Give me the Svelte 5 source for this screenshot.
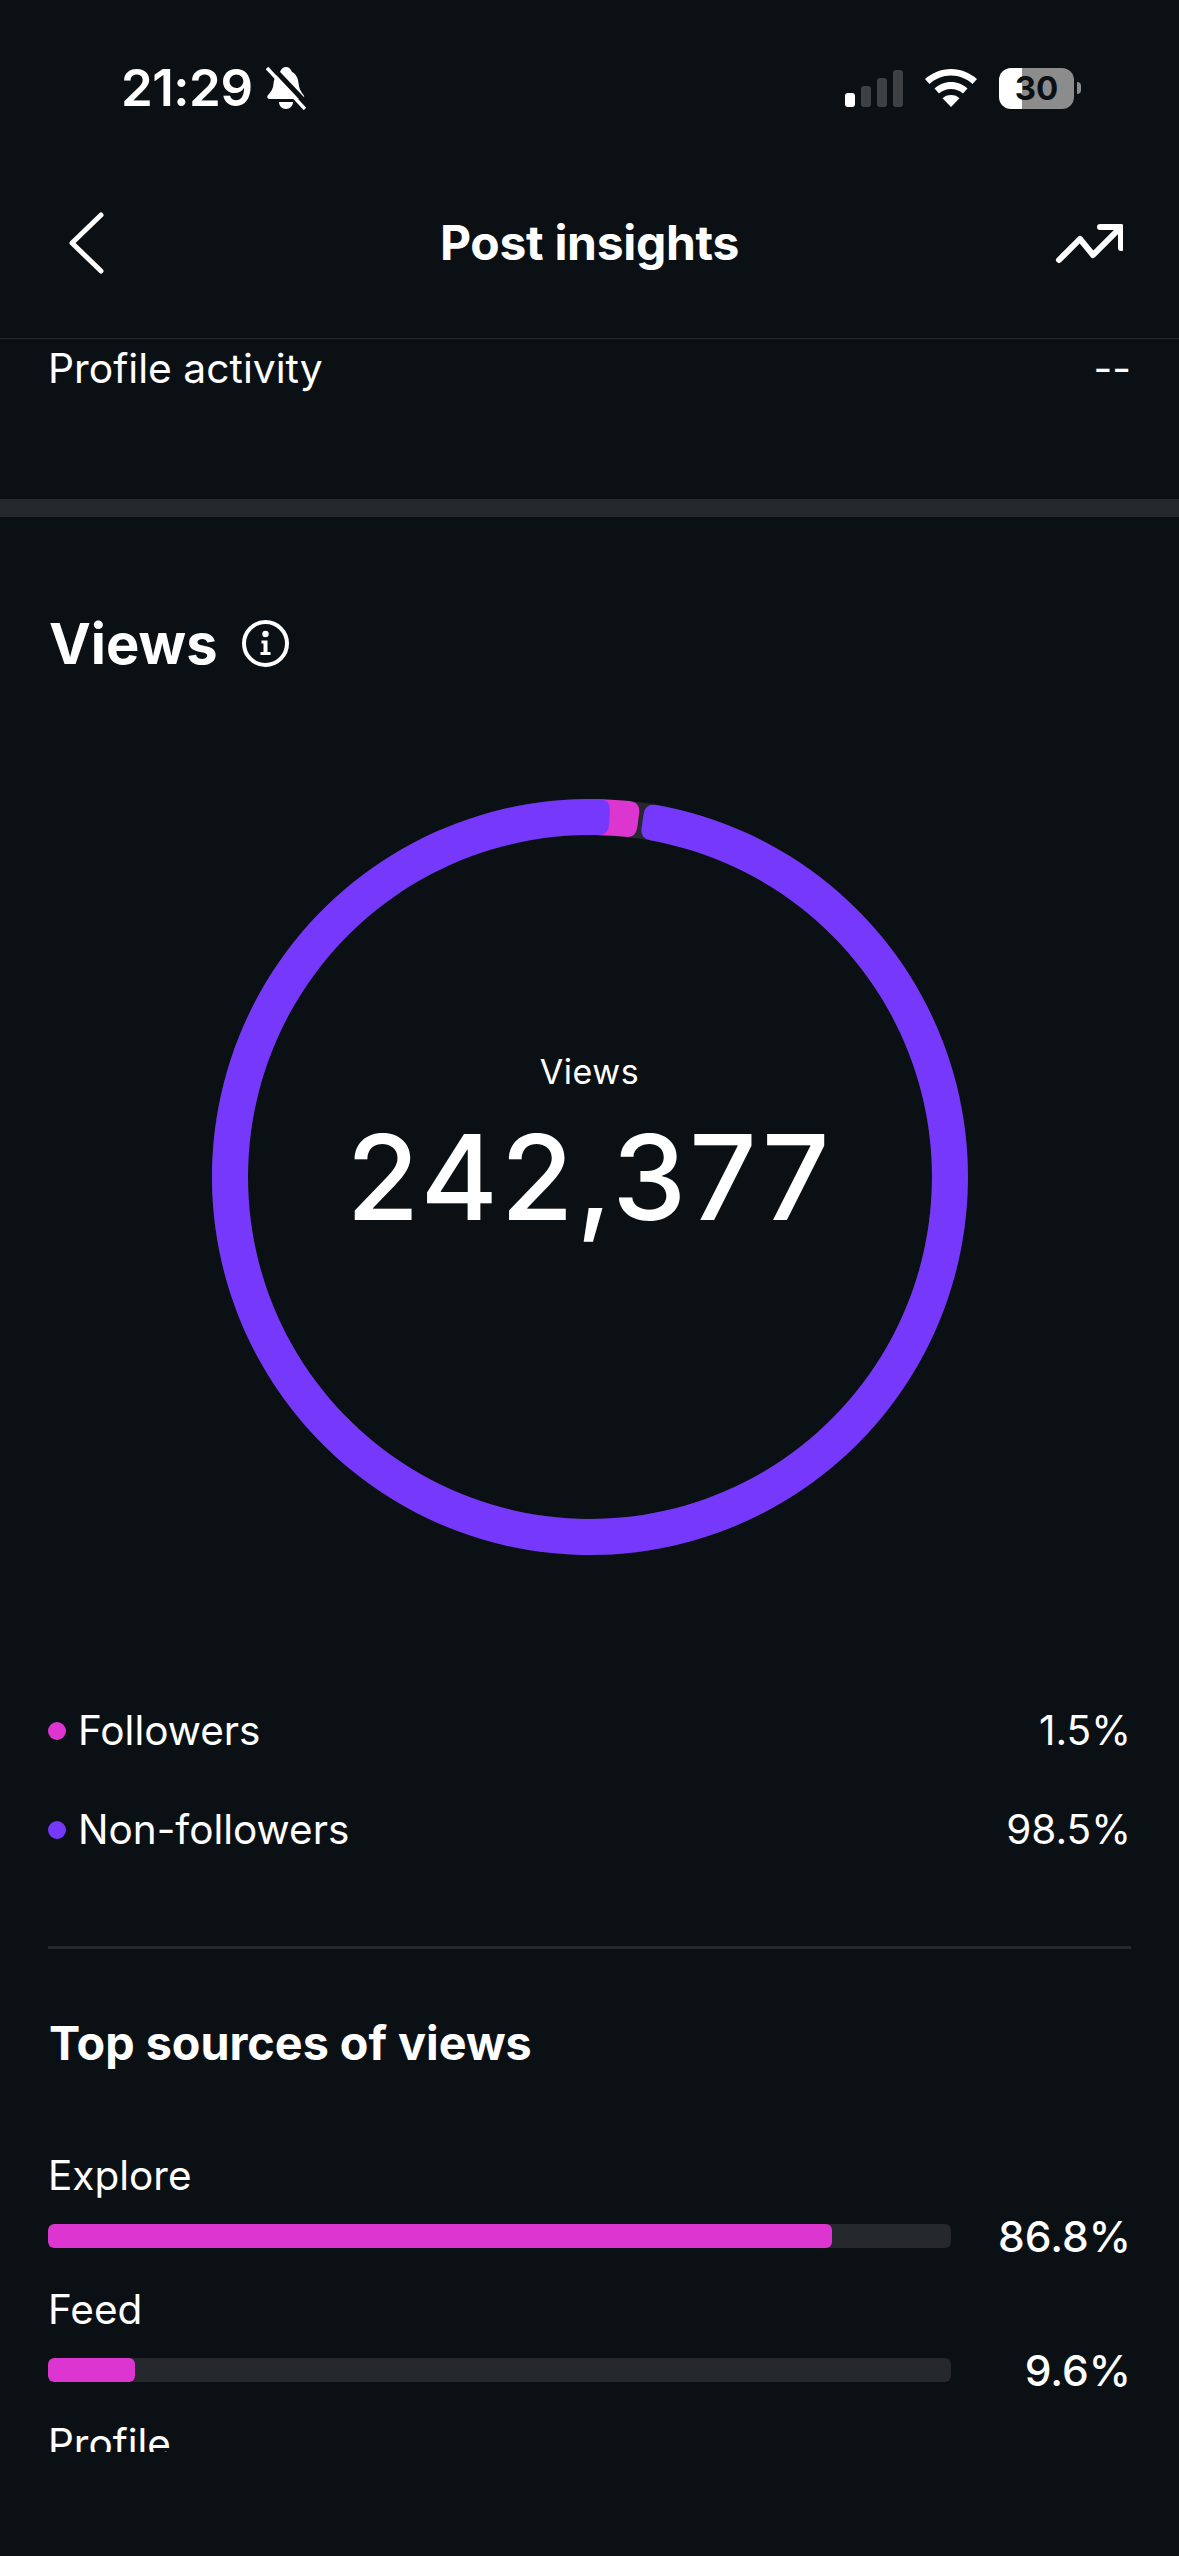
<script>
	const sources = [
		{ name: 'Explore', pct: 86.8 },
		{ name: 'Feed', pct: 9.6 },
		{ name: 'Profile' }
	];

	const legend = [
		{ name: 'Followers', value: '1.5%', color: '#dc35d0' },
		{ name: 'Non-followers', value: '98.5%', color: '#7638fa' }
	];

	const C = 378;
	const R_OUT = 378;
	const R_IN = 342;

	function pt(r, deg) {
		const a = ((deg - 90) * Math.PI) / 180;
		return `${(C + r * Math.cos(a)).toFixed(2)} ${(C + r * Math.sin(a)).toFixed(2)}`;
	}

	// ring segment with small rounded corners, angles clockwise from 12 o'clock
	function segment(from, to, corner = 11) {
		const da = (corner / 360) * (180 / Math.PI);
		const large = to - from - 2 * da > 180 ? 1 : 0;
		return [
			`M ${pt(R_OUT, from + da)}`,
			`A ${R_OUT} ${R_OUT} 0 ${large} 1 ${pt(R_OUT, to - da)}`,
			`Q ${pt(R_OUT, to)} ${pt(R_OUT - corner, to)}`,
			`L ${pt(R_IN + corner, to)}`,
			`Q ${pt(R_IN, to)} ${pt(R_IN, to - da)}`,
			`A ${R_IN} ${R_IN} 0 ${large} 0 ${pt(R_IN, from + da)}`,
			`Q ${pt(R_IN, from)} ${pt(R_IN + corner, from)}`,
			`L ${pt(R_OUT - corner, from)}`,
			`Q ${pt(R_OUT, from)} ${pt(R_OUT, from + da)}`,
			'Z'
		].join(' ');
	}
</script>

<div class="screen">
	<div class="status">
		<div class="status-left">
			<span class="time">21:29</span>
			<svg class="bell" width="40" height="44" viewBox="0 0 40 44">
				<path fill="#fff" d="M20 1c3 0 5 2 6 5 4 2 6 6 6.500 11 .5 5 2 8 5 12 1.500 2 .5 4-2 4H4c-2.500 0-3.500-2-2-4 3-3 5-6 5.500-11 .5-6 3-10 6.500-12 1-3 3-5 6-5zM13 36h14c0 4-3 7-7 7s-7-3-7-7z"/>
				<path d="M5 0 42 39" stroke="#0b1014" stroke-width="5"/>
				<path d="M1 2 39 43" stroke="#fff" stroke-width="3.500"/>
			</svg>
		</div>
		<div class="status-right">
			<div class="signal">
				<i class="on" style="height:14px"></i>
				<i style="height:21px"></i>
				<i style="height:29px"></i>
				<i style="height:37px"></i>
			</div>
			<svg class="wifi" width="52" height="38" viewBox="0 0 52 38">
				<path fill="#fff" d="M26 0c10 0 19 4 26 10l-4.500 5C41.500 9.500 34 6.500 26 6.500S10.500 9.500 4.500 15L0 10C7 4 16 0 26 0z"/>
				<path fill="#fff" d="M26 13c6.500 0 12 2.500 16.500 6.500l-4.500 5C34.500 21.500 30.500 20 26 20s-8.500 1.500-12 4.500l-4.500-5C14 15.500 19.500 13 26 13z"/>
				<path fill="#fff" d="M26 26c3.500 0 6.500 1.200 8.500 3.300L26 38l-8.500-8.700c2-2.100 5-3.300 8.500-3.300z"/>
			</svg>
			<div class="battery">
				<div class="battery-body"><span>30</span></div>
				<div class="battery-nub"></div>
			</div>
		</div>
	</div>

	<nav class="nav">
		<svg width="38" height="64" viewBox="0 0 38 64" class="back">
			<path d="M33 4 4 32l29 28" fill="none" stroke="#fff" stroke-width="5" stroke-linecap="round" stroke-linejoin="round"/>
		</svg>
		<span class="title">Post insights</span>
		<svg width="68" height="42" viewBox="0 0 68 42" class="trend">
			<path d="M4 38 25 17l13 16L65 6M45 5h21v21" fill="none" stroke="#fff" stroke-width="6" stroke-linecap="round" stroke-linejoin="round"/>
		</svg>
	</nav>

	<main class="scroll">
		<div class="row activity">
			<span>Profile activity</span>
			<span>--</span>
		</div>
		<div class="band"></div>

		<section class="views">
			<div class="heading">
				<h2>Views</h2>
				<svg width="47" height="47" viewBox="0 0 47 47">
					<circle cx="23.500" cy="23.500" r="21.500" fill="none" stroke="#fff" stroke-width="4"/>
					<circle cx="23.500" cy="14" r="3.200" fill="#fff"/>
					<path d="M19.500 20.500h6v11.500h3v3h-10v-3h3v-8.500h-2z" fill="#fff"/>
				</svg>
			</div>

			<div class="ring">
				<svg width="756" height="756" viewBox="0 0 756 756">
					<circle cx={C} cy={C} r="360" fill="none" stroke="#25282d" stroke-width="36"/>
					<path d={segment(0, 7.7)} fill="#dc35d0"/>
					<path d={segment(8.4, 363.1)} fill="#7638fa"/>
				</svg>
				<div class="ring-label">
					<span class="ring-name">Views</span>
					<span class="ring-value">242,377</span>
				</div>
			</div>

			<ul class="legend">
				{#each legend as l}
					<li>
						<span class="dot" style="background:{l.color}"></span>
						<span class="legend-name">{l.name}</span>
						<span>{l.value}</span>
					</li>
				{/each}
			</ul>

			<div class="rule"></div>

			<h3>Top sources of views</h3>

			<div class="sources">
				{#each sources as s}
					<div class="source">
						<div class="source-name">{s.name}</div>
						{#if s.pct}
							<div class="source-line">
								<div class="track"><div class="fill" style="width:{s.pct}%"></div></div>
								<span class="pct">{s.pct}%</span>
							</div>
						{/if}
					</div>
				{/each}
			</div>
		</section>
	</main>
</div>

<style>
	:global(body) {
		background: #0b1014;
	}

	.screen {
		width: 1179px;
		height: 2556px;
		background: #0b1014;
		color: #fff;
		font-family: Inter, 'Liberation Sans', sans-serif;
		overflow: hidden;
		display: flex;
		flex-direction: column;
	}

	.status {
		height: 176px;
		flex-shrink: 0;
		display: flex;
		align-items: center;
		justify-content: space-between;
		padding: 0 98px 0 121px;
		box-sizing: border-box;
	}

	.status-left {
		display: flex;
		align-items: center;
		gap: 13px;
	}

	.time {
		font-size: 51px;
		font-weight: 600;
		line-height: 60px;
		letter-spacing: -0.5px;
	}

	.status-right {
		display: flex;
		align-items: center;
	}

	.signal {
		display: flex;
		align-items: flex-end;
		gap: 6px;
		height: 37px;
		margin-right: 22px;
	}

	.signal i {
		display: block;
		width: 10px;
		border-radius: 3px;
		background: #3d4144;
	}

	.signal i.on {
		background: #fff;
	}

	.battery {
		display: flex;
		align-items: center;
		margin-left: 22px;
		gap: 3px;
	}

	.battery-body {
		width: 75px;
		height: 41px;
		border-radius: 12px;
		background: linear-gradient(90deg, #fff 0 23px, #8c8c8c 23px);
		display: flex;
		align-items: center;
		justify-content: center;
		color: #0b1014;
		font-size: 33px;
		font-weight: 700;
	}

	.battery-nub {
		width: 4px;
		height: 12px;
		background: #8c8c8c;
		border-radius: 0 6px 6px 0;
	}

	.nav {
		height: 163px;
		flex-shrink: 0;
		box-sizing: border-box;
		padding: 0 56px 29px;
		border-bottom: 1px solid #25282d;
		display: grid;
		grid-template-columns: 1fr auto 1fr;
		align-items: center;
	}

	.back {
		margin-left: 12px;
	}

	.trend {
		justify-self: end;
	}

	.title {
		font-size: 48px;
		font-weight: 700;
		letter-spacing: -0.3px;
	}

	.scroll {
		height: 2113px;
		flex-shrink: 0;
		overflow: hidden;
	}

	.row {
		display: flex;
		justify-content: space-between;
	}

	.activity {
		padding: 4px 48px 0 48px;
		font-size: 40.800px;
		line-height: 50px;
		height: 160px;
		box-sizing: border-box;
	}

	.band {
		height: 18px;
		background: #25282d;
	}

	.views {
		padding: 92px 48px 0;
	}

	.heading {
		display: flex;
		align-items: center;
		gap: 24px;
	}

	.heading svg {
		margin-top: -2px;
	}

	h2 {
		margin: 0;
		font-size: 56px;
		line-height: 70px;
		font-weight: 700;
		padding-left: 1px;
	}

	.ring {
		width: 756px;
		height: 756px;
		margin: 120px auto 0;
		position: relative;
	}

	.ring svg {
		display: block;
	}

	.ring-label {
		position: absolute;
		inset: 0;
		padding-bottom: 62px;
		display: flex;
		flex-direction: column;
		align-items: center;
		justify-content: center;
		gap: 18px;
	}

	.ring-name {
		font-size: 34px;
		line-height: 44px;
		letter-spacing: 0.6px;
	}

	.ring-value {
		font-size: 118px;
		font-weight: 500;
		line-height: 130px;
		letter-spacing: 3px;
	}

	.legend {
		list-style: none;
		margin: 151px 0 0;
		padding: 0;
		display: flex;
		flex-direction: column;
		gap: 49px;
		font-size: 40.500px;
		line-height: 50px;
	}

	.legend li {
		display: flex;
		align-items: center;
	}

	.dot {
		width: 18px;
		height: 18px;
		border-radius: 50%;
		margin-right: 12px;
	}

	.legend-name {
		flex: 1;
	}

	.rule {
		height: 3px;
		background: #25282d;
		margin-top: 91px;
	}

	h3 {
		margin: 66px 0 0;
		padding-left: 1px;
		font-size: 46.700px;
		line-height: 56px;
		font-weight: 700;
	}

	.sources {
		margin-top: 80px;
		display: flex;
		flex-direction: column;
		gap: 19px;
	}

	.source-name {
		font-size: 40.500px;
		line-height: 50px;
	}

	.source-line {
		display: flex;
		align-items: center;
		gap: 46px;
		height: 60px;
		margin-top: 5px;
	}

	.track {
		flex: 1;
		height: 24px;
		border-radius: 6px;
		background: #25282d;
		overflow: hidden;
	}

	.fill {
		height: 100%;
		background: #dc35d0;
		border-radius: 6px;
	}

	.pct {
		font-size: 42.500px;
		font-weight: 500;
		width: 134px;
		text-align: right;
	}
</style>
